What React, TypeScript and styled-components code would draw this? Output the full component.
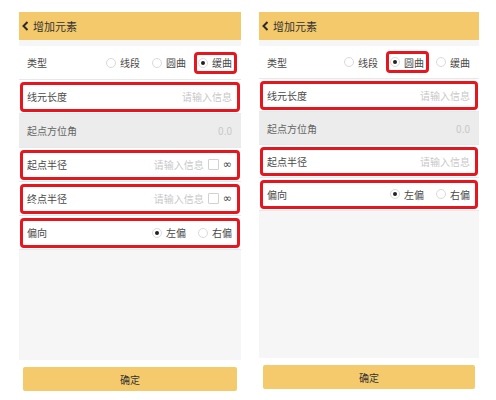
import React from "react";
import styled, { createGlobalStyle, css } from "styled-components";

const GlobalStyle = createGlobalStyle`
  html, body {
    margin: 0;
    padding: 0;
    background: #ffffff;
  }
  body {
    font-family: "Noto Sans CJK SC", "Noto Sans", sans-serif;
  }
`;

const Page = styled.div`
  width: 496px;
  height: 400px;
  box-sizing: border-box;
  padding: 12px 0 0 19px;
  display: flex;
  align-items: flex-start;
  gap: 18px;
`;

const Screen = styled.div<{ $compact?: boolean }>`
  --row: ${({ $compact }) => ($compact ? "32px" : "33px")};
  width: ${({ $compact }) => ($compact ? "220px" : "222px")};
  height: ${({ $compact }) => ($compact ? "382px" : "384px")};
  display: flex;
  flex-direction: column;
  background: #f6f6f6;
`;

const Header = styled.div`
  height: 28px;
  flex-shrink: 0;
  background: #f4c96c;
  display: flex;
  align-items: center;
  gap: 4px;
  padding-left: 3px;
  font-size: 11px;
  color: #333333;
`;

const Body = styled.div`
  flex: 1;
  padding-top: 6px;
  display: flex;
  flex-direction: column;
`;

const markBox = css`
  &::after {
    content: "";
    position: absolute;
    border: 3px solid #e5161d;
    border-radius: 4px;
    pointer-events: none;
  }
`;

const Row = styled.div<{ $disabled?: boolean; $marked?: boolean }>`
  position: relative;
  height: var(--row);
  flex-shrink: 0;
  display: flex;
  align-items: center;
  justify-content: space-between;
  padding: 0 9px 0 8px;
  background: ${({ $disabled }) => ($disabled ? "#ececec" : "#ffffff")};
  border-bottom: 1px solid #e8e8e8;
  font-size: 10px;
  color: ${({ $disabled }) => ($disabled ? "#666666" : "#4a4a4a")};
  ${({ $marked }) =>
    $marked &&
    css`
      ${markBox}
      &::after {
        inset: 2px 1px 1px 1px;
      }
    `}
`;

const Label = styled.span`
  white-space: nowrap;
`;

const Field = styled.div`
  display: flex;
  align-items: center;
  gap: 4px;
`;

const Placeholder = styled.span`
  color: #c8c8c8;
  white-space: nowrap;
`;

const Check = styled.span`
  width: 11px;
  height: 11px;
  box-sizing: border-box;
  border: 1px solid #d2d2d2;
  border-radius: 1px;
  background: #ffffff;
`;

const Infinity = styled.span`
  font-family: "DejaVu Sans", sans-serif;
  font-size: 11px;
  color: #444444;
  line-height: 1;
`;

const Options = styled.div`
  display: flex;
  align-items: center;
  gap: 12px;
`;

const Option = styled.span<{ $marked?: boolean }>`
  position: relative;
  height: 12px;
  display: flex;
  align-items: center;
  gap: 4px;
  white-space: nowrap;
  ${({ $marked }) =>
    $marked &&
    css`
      ${markBox}
      &::after {
        inset: -5px -5px -5px -4px;
      }
    `}
`;

const Radio = styled.span<{ $checked?: boolean }>`
  width: 10px;
  height: 10px;
  box-sizing: border-box;
  border-radius: 50%;
  border: 1px solid #dadada;
  background: #ffffff;
  display: flex;
  align-items: center;
  justify-content: center;
  &::before {
    content: "";
    width: 4px;
    height: 4px;
    border-radius: 50%;
    background: #222222;
    display: ${({ $checked }) => ($checked ? "block" : "none")};
  }
`;

const Footer = styled.div`
  flex-shrink: 0;
  background: #ffffff;
  padding: 5px 4px;
`;

const Confirm = styled.button`
  width: 100%;
  height: 24px;
  border: 0;
  border-radius: 2px;
  background: #f5ca6d;
  color: #333333;
  font-family: "Noto Sans CJK SC", sans-serif;
  font-size: 10px;
  padding: 0;
`;

type Choice = { text: string; checked?: boolean; marked?: boolean };

function RadioGroup({ items }: { items: Choice[] }) {
  return (
    <Options>
      {items.map((it) => (
        <Option key={it.text} $marked={it.marked}>
          <Radio $checked={it.checked} />
          {it.text}
        </Option>
      ))}
    </Options>
  );
}

function InputRow({ label, marked, lock }: { label: string; marked?: boolean; lock?: boolean }) {
  return (
    <Row $marked={marked}>
      <Label>{label}</Label>
      <Field>
        <Placeholder>请输入信息</Placeholder>
        {lock && (
          <>
            <Check />
            <Infinity>∞</Infinity>
          </>
        )}
      </Field>
    </Row>
  );
}

function Phone({ type, compact }: { type: "圆曲" | "缓曲"; compact?: boolean }) {
  const spiral = type === "缓曲";
  return (
    <Screen $compact={compact}>
      <Header>
        <svg width="7" height="10" viewBox="0 0 7 10">
          <polyline points="5.5,1 1.5,5 5.5,9" fill="none" stroke="#2a2a2a" strokeWidth="2" />
        </svg>
        增加元素
      </Header>
      <Body>
        <Row>
          <Label>类型</Label>
          <RadioGroup
            items={[
              { text: "线段" },
              { text: "圆曲", checked: !spiral, marked: !spiral },
              { text: "缓曲", checked: spiral, marked: spiral },
            ]}
          />
        </Row>
        <InputRow label="线元长度" marked />
        <Row $disabled>
          <Label>起点方位角</Label>
          <Placeholder>0.0</Placeholder>
        </Row>
        <InputRow label="起点半径" marked lock={spiral} />
        {spiral && <InputRow label="终点半径" marked lock />}
        <Row $marked>
          <Label>偏向</Label>
          <RadioGroup items={[{ text: "左偏", checked: true }, { text: "右偏" }]} />
        </Row>
      </Body>
      <Footer>
        <Confirm>确定</Confirm>
      </Footer>
    </Screen>
  );
}

export default function App() {
  return (
    <>
      <GlobalStyle />
      <Page>
        <Phone type="缓曲" />
        <Phone type="圆曲" compact />
      </Page>
    </>
  );
}
